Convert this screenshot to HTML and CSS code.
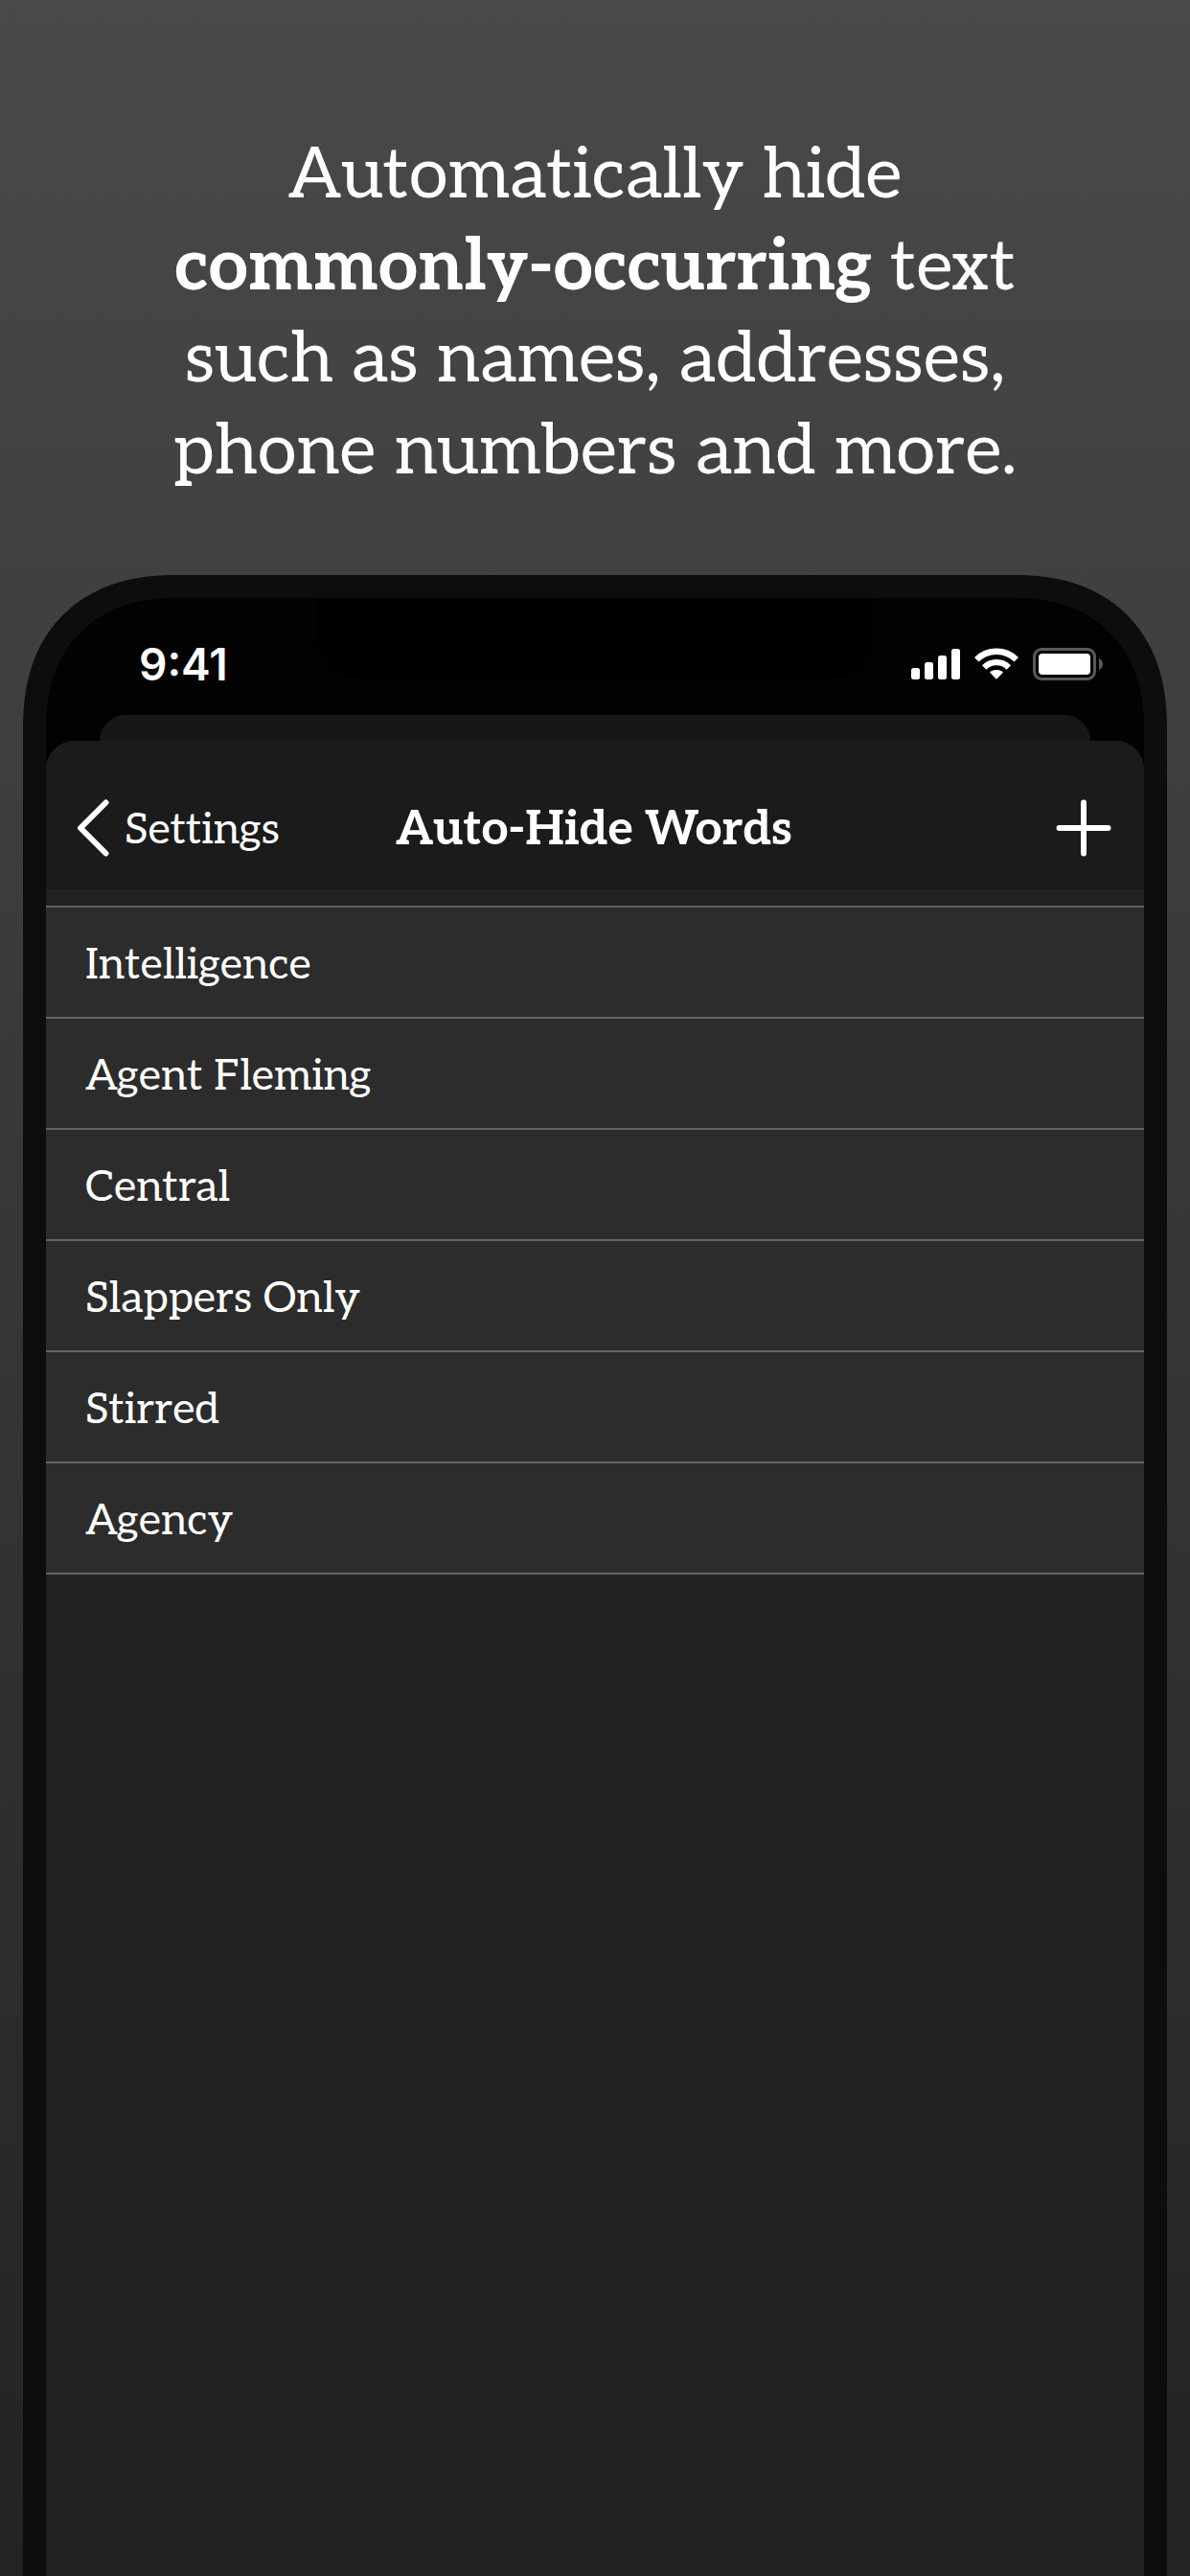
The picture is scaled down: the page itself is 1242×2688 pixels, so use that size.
FILE: index.html
```html
<!DOCTYPE html>
<html lang="en">
<head>
<meta charset="utf-8">
<meta name="viewport" content="width=device-width, initial-scale=1">
<title>Auto-Hide Words</title>
<link rel="stylesheet" href="styles.css">
</head>
<body>
<main class="page">
  <h1 class="headline">Automatically hide<br><strong>commonly-occurring</strong> text<br>such as names, addresses,<br>phone numbers and more.</h1>
  <section class="phone">
    <div class="notch"></div>
    <div class="status">
      <time class="clock">9:41</time>
      <div class="indicators">
        <svg class="signal" width="51" height="34" viewBox="0 0 51 34" fill="#fff" aria-hidden="true">
          <rect x="0" y="21" width="9" height="12" rx="2.5"/>
          <rect x="14" y="15" width="9" height="18" rx="2.5"/>
          <rect x="28" y="8" width="9" height="25" rx="2.5"/>
          <rect x="42" y="1" width="9" height="32" rx="2.5"/>
        </svg>
        <svg class="wifi" width="46" height="34" viewBox="0 0 46 34" aria-hidden="true">
          <g fill="none" stroke="#fff" stroke-width="6.4">
            <path d="M2.2 12.3A29.6 29.6 0 0 1 43.8 12.3"/>
            <path d="M10.2 20.4A18.2 18.2 0 0 1 35.8 20.4"/>
          </g>
          <path fill="#fff" d="M16.6 26.2Q15.700 25.500 16.800 24.800C20.400 22.300 25.600 22.300 29.200 24.800Q30.300 25.500 29.400 26.200L23.600 32.300Q23 32.900 22.400 32.300Z"/>
        </svg>
        <svg class="battery" width="73" height="34" viewBox="0 0 73 34" aria-hidden="true">
          <rect x="1.500" y="1.500" width="63" height="31" rx="7.500" fill="none" stroke="#5a5a5a" stroke-width="3"/>
          <rect x="6" y="6" width="54" height="22" rx="4" fill="#fff"/>
          <path d="M69 11C74.300 13 74.300 21 69 23Z" fill="#5a5a5a"/>
        </svg>
      </div>
    </div>
    <div class="sheet-behind"></div>
    <div class="sheet">
      <header class="nav">
        <button class="back" type="button">
          <svg width="34" height="60" viewBox="0 0 34 60" aria-hidden="true"><path d="M30.500 3.500L4 30L30.500 56.500" fill="none" stroke="#fff" stroke-width="6" stroke-linecap="round" stroke-linejoin="round"/></svg>
          <span class="back-label">Settings</span>
        </button>
        <h2 class="title">Auto-Hide Words</h2>
        <button class="add" type="button" aria-label="Add word">
          <svg width="58" height="60" viewBox="0 0 58 60" aria-hidden="true"><path d="M29 3.500V56.500M3.500 30H54.500" fill="none" stroke="#fff" stroke-width="6" stroke-linecap="round"/></svg>
        </button>
      </header>
      <ul class="words">
        <li>Intelligence</li>
        <li>Agent Fleming</li>
        <li>Central</li>
        <li>Slappers Only</li>
        <li>Stirred</li>
        <li>Agency</li>
      </ul>
    </div>
  </section>
</main>
</body>
</html>
```
FILE: styles.css
```css
* {
  box-sizing: border-box;
}

body {
  margin: 0;
  color: #fff;
  font-family: Aleo, "Liberation Serif", serif;
  background: #232323;
}

.page {
  display: flex;
  flex-direction: column;
  min-height: 100vh;
  padding: 0 24px;
  background: linear-gradient(#494949, #232323);
}

.headline {
  margin: 0;
  padding: 136px 0 80px;
  font-size: 74px;
  font-weight: 400;
  line-height: 96px;
  text-align: center;
}

.headline strong {
  font-weight: 700;
}

.phone {
  position: relative;
  display: flex;
  flex-direction: column;
  flex: 1;
  overflow: hidden;
  background: #020202;
  border: 24px solid #0d0d0d;
  border-bottom: 0;
  border-radius: 140px 140px 0 0;
}

@supports (corner-shape: superellipse(1.2)) {
  .phone {
    border-radius: 160px 160px 0 0;
    corner-shape: superellipse(1.2);
  }
}

.notch {
  position: absolute;
  top: 0;
  left: 50%;
  width: 580px;
  height: 83px;
  margin-left: -290px;
  background: #000;
  border-radius: 0 0 42px 42px;
}

.status {
  position: relative;
  display: flex;
  align-items: center;
  justify-content: space-between;
  height: 122px;
  padding: 16px 43px 0 97px;
}

.clock {
  font-family: Inter, "Liberation Sans", sans-serif;
  font-size: 46px;
  font-weight: 600;
  line-height: 52px;
}

.indicators {
  display: flex;
  gap: 15px;
}

.indicators svg {
  display: block;
}

.sheet-behind {
  height: 27px;
  margin: 0 56px;
  background: #151719;
  border-radius: 27px 27px 0 0;
}

.sheet {
  flex: 1;
  overflow: hidden;
  background: #212121;
  border-radius: 30px 30px 0 0;
}

.nav {
  display: grid;
  grid-template-columns: 1fr auto 1fr;
  align-items: center;
  height: 155px;
  padding: 26px 34px 0 32px;
  background: #1b1b1b;
}

.back,
.add {
  display: flex;
  align-items: center;
  padding: 0;
  color: inherit;
  font: inherit;
  background: none;
  border: 0;
}

.back {
  gap: 16px;
  justify-self: start;
  font-size: 45px;
  line-height: 60px;
}

.back-label,
.title {
  padding-top: 4px;
}

.add {
  justify-self: end;
}

.title {
  margin: 0;
  font-size: 50px;
  font-weight: 700;
  line-height: 60px;
}

.words {
  margin: 17px 0 0;
  padding: 0;
  list-style: none;
  background: #2c2c2c;
  border-bottom: 2px solid #636363;
}

.words li {
  padding: 30px 41px 24px;
  font-size: 45px;
  line-height: 60px;
  border-top: 2px solid #636363;
}
```
